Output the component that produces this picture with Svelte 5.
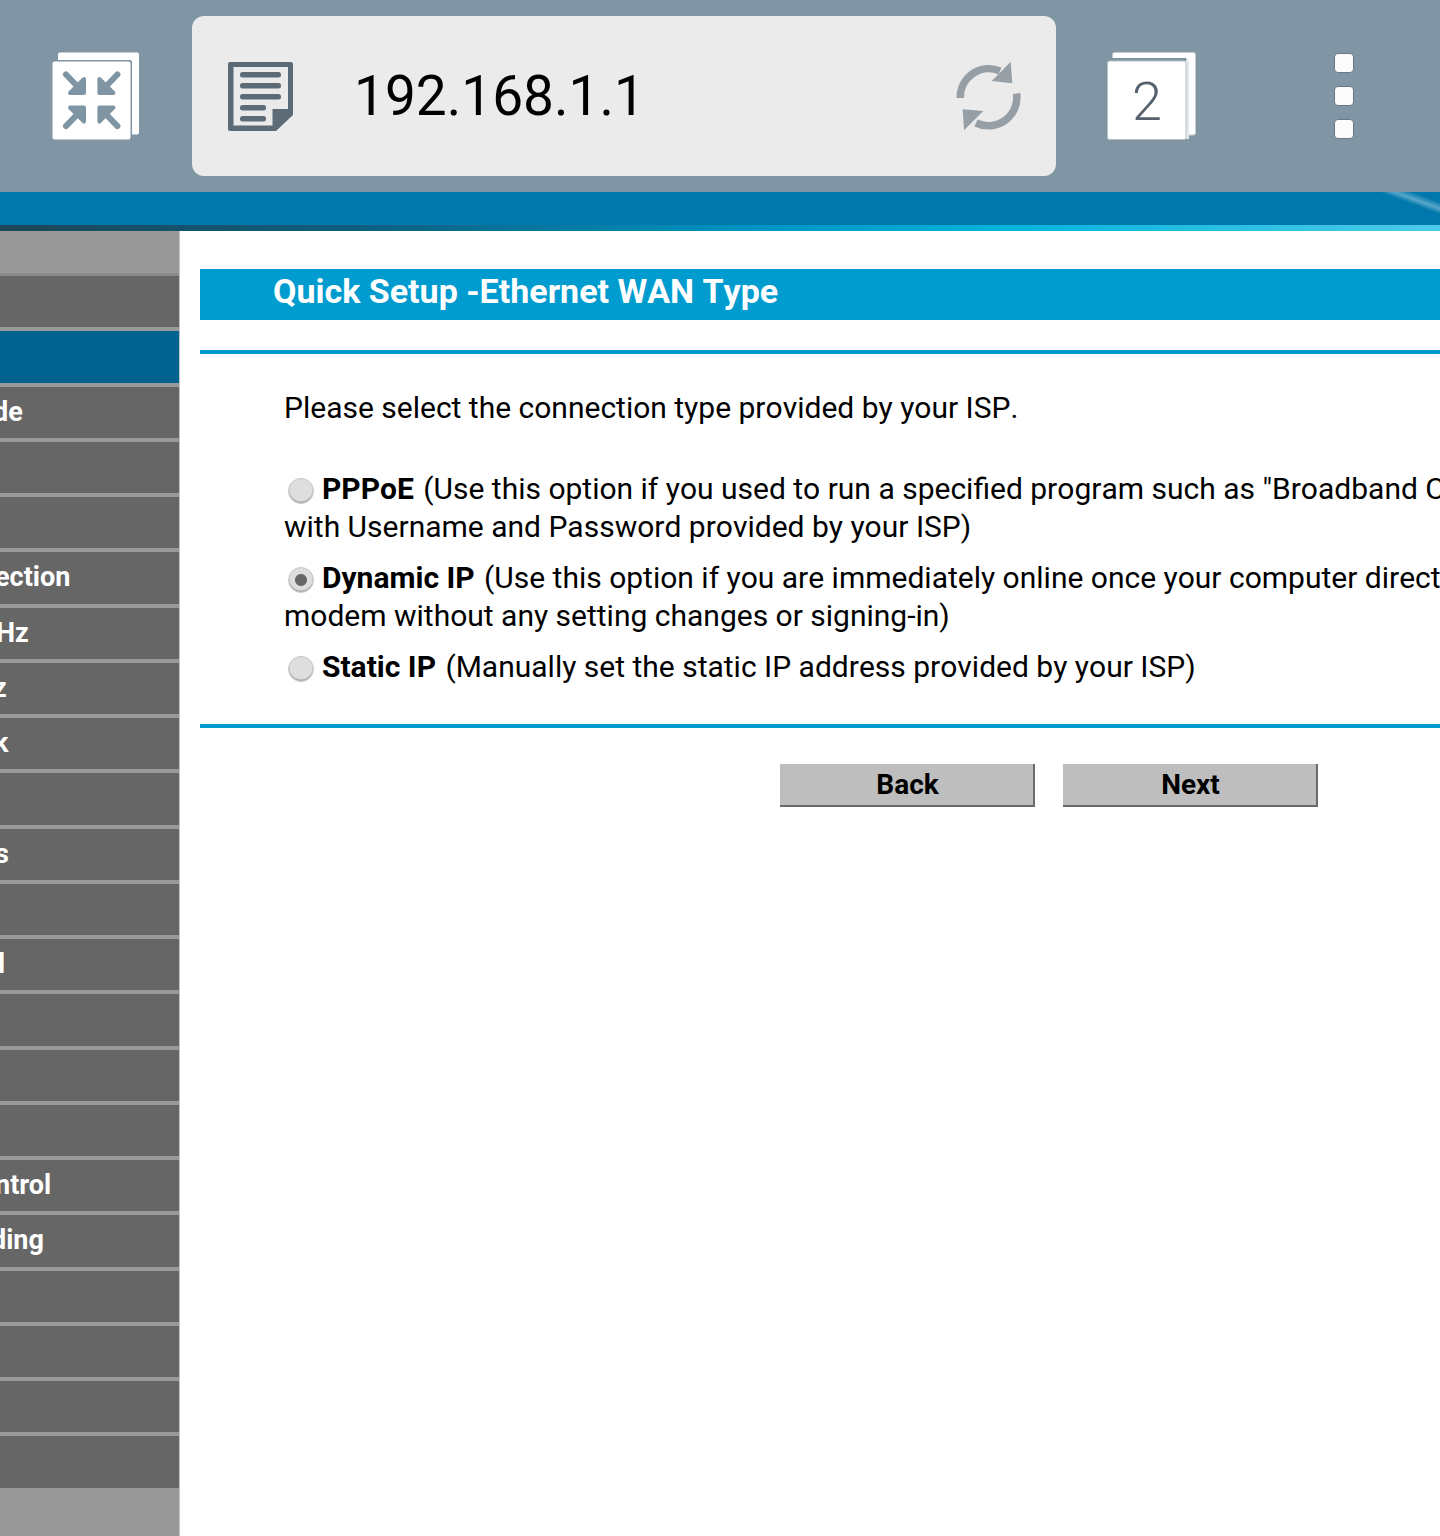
<script>
	// left offset lets clipped menu labels run off the sidebar edge
	const menu = [
		{}, { active: true }, { text: "de", x: -7 }, {}, {},
		{ text: "ection", x: -5 }, { text: "Hz", x: -4 }, { text: "z", x: -7 }, { text: "k", x: -6 }, {},
		{ text: "s", x: -5 }, {}, { text: "l", x: -2 }, {}, {}, {},
		{ text: "ntrol", x: -5 }, { text: "ding", x: -9 }, {}, {}, {}, {}
	];
	const arrows = [
		"",
		"translate(183.4 0) scale(-1 1)",
		"translate(0 200.6) scale(1 -1)",
		"translate(183.4 200.6) scale(-1 -1)"
	];
	let type = "dynamic";
</script>

<div class="page">
	<header class="toolbar">
		<svg class="ico-shrink" viewBox="52 52 88 88" width="88" height="88">
			<rect x="58" y="52.5" width="81" height="82" rx="2" fill="#fff" />
			<rect x="52" y="60" width="80" height="80" rx="2" fill="#7f95a3" />
			<rect x="52.5" y="61.5" width="78" height="78" rx="2" fill="#fff" />
			{#each arrows as t}
				<g transform={t} fill="#7f95a3" stroke="#7f95a3" stroke-linecap="round" stroke-linejoin="round">
					<path d="M66 74.5 L78 87" stroke-width="6" fill="none" />
					<path d="M84 79 V93 H70 Z" stroke-width="4" />
				</g>
			{/each}
		</svg>

		<div class="address">
			<svg class="ico-doc" viewBox="228 62 65 69" width="65" height="69">
				<path d="M230 62 H291 Q293 62 293 64 V115 L276 131 H230 Q228 131 228 129 V64 Q228 62 230 62 Z" fill="#5d6b77" />
				<path d="M233.5 67 H288 V109 H272.5 V125.5 H233.5 Z" fill="#eaeaea" />
				<g fill="#5d6b77">
					<rect x="240" y="72" width="41" height="5.5" rx="2.5" />
					<rect x="240" y="83" width="41" height="5.5" rx="2.5" />
					<rect x="240" y="94" width="41" height="5.5" rx="2.5" />
					<rect x="240" y="105" width="26" height="5.5" rx="2.5" />
					<rect x="240" y="116" width="26" height="5.5" rx="2.5" />
				</g>
			</svg>
			<span class="url">192.168.1.1</span>
			<svg class="ico-reload" viewBox="956 60 65 70" width="65" height="70">
				<g fill="none" stroke="#979fa6" stroke-width="7.5">
					<path d="M960.3 97 A28.5 28.5 0 0 1 1000 70" />
					<path d="M1016.6 92.5 A28.5 28.5 0 0 1 976 122" />
				</g>
				<g fill="#979fa6">
					<path d="M1010.7 60.7 L1012.3 82.3 L991.7 80 Z" />
					<path d="M962.7 108.3 L983.3 110 L964 129.3 Z" />
				</g>
			</svg>
		</div>

		<svg class="ico-tabs" viewBox="1107 52 89 88" width="89" height="88">
			<rect x="1112.5" y="52.5" width="83" height="82.5" rx="2" fill="#fff" stroke="#c5cbd0" />
			<rect x="1107.5" y="58" width="79" height="3" fill="#7f95a3" />
			<rect x="1186" y="60" width="3" height="79" fill="#e4e7ea" />
			<rect x="1107.5" y="61" width="78.5" height="78.5" rx="2" fill="#fff" stroke="#b9c0c5" />
			<text x="1147" y="120" text-anchor="middle">2</text>
		</svg>

		<div class="dots"><i></i><i></i><i></i></div>
	</header>

	<div class="band"></div>
	<div class="strip"></div>

	<div class="body">
		<nav class="side">
			<div class="side-top"></div>
			{#each menu as m}
				<div class="item" class:active={m.active}>
					{#if m.text}<span style="margin-left:{m.x}px">{m.text}</span>{/if}
				</div>
			{/each}
		</nav>

		<main class="content">
			<h1>Quick Setup -Ethernet WAN Type</h1>
			<div class="rule"></div>
			<p class="lead">Please select the connection type provided by your ISP.</p>

			<label class="opt">
				<span class="line"><input type="radio" bind:group={type} value="pppoe" /><b>PPPoE</b> (Use this option if you used to run a specified program such as "Broadband Connection"</span>
				<span class="line">with Username and Password provided by your ISP)</span>
			</label>
			<label class="opt">
				<span class="line"><input type="radio" bind:group={type} value="dynamic" /><b>Dynamic IP</b> (Use this option if you are immediately online once your computer directly connects to the</span>
				<span class="line">modem without any setting changes or signing-in)</span>
			</label>
			<label class="opt">
				<span class="line"><input type="radio" bind:group={type} value="static" /><b>Static IP</b> (Manually set the static IP address provided by your ISP)</span>
			</label>

			<div class="rule rule2"></div>
			<div class="buttons">
				<button>Back</button>
				<button>Next</button>
			</div>
		</main>
	</div>
</div>

<style>
	:global(body) {
		margin: 0;
		background: #fff;
	}
	.page {
		width: 1440px;
		height: 1536px;
		overflow: hidden;
		font-family: Roboto, sans-serif;
		color: #000;
	}
	.toolbar {
		height: 192px;
		background: #8196a4;
		display: flex;
		align-items: center;
	}
	.toolbar svg {
		display: block;
		flex: none;
	}
	.ico-shrink {
		margin-left: 52px;
		margin-right: 52px;
	}
	.address {
		width: 864px;
		height: 160px;
		background: #ebebeb;
		border-radius: 12px;
		display: flex;
		align-items: center;
		padding-left: 36px;
		box-sizing: border-box;
	}
	.url {
		margin-left: 61px;
		font-size: 55px;
		width: 602px;
	}
	.ico-tabs {
		margin-left: 51px;
	}
	.ico-tabs text {
		font-family: Roboto, sans-serif;
		font-weight: 300;
		font-size: 54px;
		fill: #55626e;
	}
	.dots {
		margin-left: 138px;
		display: flex;
		flex-direction: column;
		gap: 13px;
	}
	.dots i {
		display: block;
		box-sizing: border-box;
		width: 20px;
		height: 20px;
		background: #fbfbfb;
		border-radius: 4px;
		border: 1px solid #66798a;
	}
	.band {
		height: 33px;
		background: linear-gradient(20deg, #0078ab 96%, #58a6c9 97%, #0078ab 98.2%);
	}
	.strip {
		height: 6px;
		background: linear-gradient(90deg, #1d4657 0%, #0d5f80 25%, #0090bd 50%, #05b4dc 70%, #4ccbe9 100%);
	}
	.body {
		display: flex;
	}
	.side {
		width: 179px;
		height: 1305px;
		flex: none;
		background: #999;
		border-right: 1px solid #c4c4c4;
	}
	.side-top {
		height: 42px;
		border-bottom: 3px solid #8a8a8a;
	}
	.item {
		height: 51.25px;
		margin-bottom: 4px;
		background: #666;
		color: #fff;
		font-size: 27px;
		font-weight: 700;
		line-height: 51px;
		white-space: nowrap;
		overflow: hidden;
	}
	.item span {
		display: inline-block;
	}
	.item.active {
		background: #00628f;
	}
	.content {
		flex: none;
		width: 1400px;
		padding: 38px 0 0 20px;
		box-sizing: border-box;
	}
	h1 {
		margin: 0;
		height: 51px;
		padding-left: 73px;
		background: #009ccf;
		color: #fff;
		font-size: 34px;
		font-weight: 700;
		font-kerning: none;
		line-height: 45px;
	}
	.rule {
		height: 4px;
		margin-top: 30px;
		background: #009ccf;
	}
	.lead {
		margin: 33px 0 0 84px;
		font-size: 30px;
		font-kerning: none;
		line-height: 42px;
	}
	.opt {
		display: block;
		margin-left: 84px;
		font-size: 30px;
		font-kerning: none;
		line-height: 38px;
		white-space: nowrap;
		margin-bottom: 13px;
	}
	.opt b {
		margin-right: 2px;
	}
	.lead + .opt {
		margin-top: 41px;
	}
	.line {
		display: block;
	}
	.opt input {
		appearance: none;
		display: inline-block;
		box-sizing: border-box;
		width: 26px;
		height: 26px;
		margin: 0 8px 0 4px;
		vertical-align: -5px;
		border-radius: 50%;
		border: 1.5px solid #c6c6c6;
		background: #dedede;
		box-shadow: inset 0 -1.5px 1px #a8a8a8;
	}
	.opt input:checked {
		background: radial-gradient(circle, #666 5.5px, #dedede 6.5px);
	}
	.rule2 {
		margin-top: 38px;
	}
	.buttons {
		display: flex;
		gap: 28px;
		margin: 36px 0 0 580px;
	}
	button {
		width: 255px;
		height: 43px;
		padding: 0 0 0 2px;
		border: 0;
		border-right: 2px solid #6a6a6a;
		border-bottom: 2px solid #6a6a6a;
		background: #bebebe;
		color: #000;
		font-family: Roboto, sans-serif;
		font-size: 28px;
		font-weight: 700;
	}
</style>
